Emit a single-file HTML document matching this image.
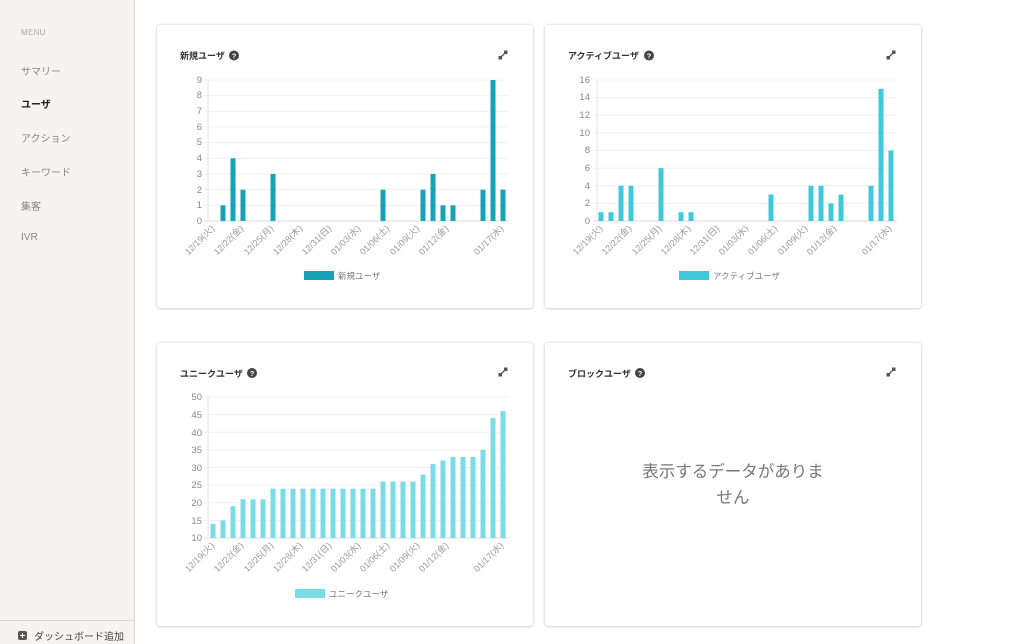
<!DOCTYPE html>
<html><head><meta charset="utf-8">
<style>
*{margin:0;padding:0;box-sizing:border-box}
body{width:1024px;height:644px;overflow:hidden;background:#fff;font-family:"Liberation Sans","Noto Sans CJK JP",sans-serif;position:relative}
#side{position:absolute;left:0;top:0;width:135px;height:644px;background:#f5f4f2;border-right:1px solid #dcd9d5}
#side .m{position:absolute;left:21px;top:28px;font-size:8px;color:#b0aaa5;letter-spacing:.3px}
#side .it{position:absolute;left:21px;font-size:10px;color:#8a8580}
#side .act{color:#222;font-weight:bold}
#side .bot{position:absolute;left:0;right:0;top:620px;border-top:1px solid #dcd9d5}
#side .add{position:absolute;left:34px;top:628px;font-size:10px;color:#444}
#side .plus{position:absolute;left:18px;top:631px;width:9px;height:9px;background:#555;border-radius:2px}
#side .plus:before{content:"";position:absolute;left:2px;top:4px;width:5px;height:1px;background:#fff}
#side .plus:after{content:"";position:absolute;left:4px;top:2px;width:1px;height:5px;background:#fff}
.card{position:absolute;width:376px;height:283px;background:#fff;border-radius:3px;box-shadow:0 0 3px rgba(0,0,0,.18),0 1px 2px rgba(0,0,0,.1)}
svg{position:absolute;left:0;top:0}
.ttl{font-size:9px;font-weight:bold;fill:#333}
.yl{font-size:9.5px;fill:#888;text-anchor:end}
.xl{font-size:9px;fill:#999;text-anchor:end}
.lg{font-size:8.5px;fill:#777}
</style></head><body>
<div id="side">
<div class="m">MENU</div>
<div class="it" style="top:63px">サマリー</div>
<div class="it act" style="top:96px">ユーザ</div>
<div class="it" style="top:130px">アクション</div>
<div class="it" style="top:164px">キーワード</div>
<div class="it" style="top:198px">集客</div>
<div class="it" style="top:232px">IVR</div>
<div class="bot"></div>
<div class="plus"></div>
<div class="add">ダッシュボード追加</div>
</div>
<div class="card" style="left:157px;top:25px"></div>
<div class="card" style="left:545px;top:25px"></div>
<div class="card" style="left:157px;top:343px"></div>
<div class="card" style="left:545px;top:343px"></div>
<svg id="s" width="1024" height="644" xmlns="http://www.w3.org/2000/svg">
<g id="grid"></g>
<g id="bars"></g>
<text class="ttl" x="180" y="59">新規ユーザ</text>
<text class="ttl" x="568" y="59">アクティブユーザ</text>
<text class="ttl" x="180" y="377">ユニークユーザ</text>
<text class="ttl" x="568" y="377">ブロックユーザ</text>
<g fill="#444">
<circle cx="234" cy="55.5" r="5"/><circle cx="649" cy="55.5" r="5"/><circle cx="252" cy="373" r="5"/><circle cx="640" cy="373" r="5"/>
</g>
<g font-size="7.5" font-weight="bold" fill="#fff" text-anchor="middle">
<text x="234" y="58.5">?</text><text x="649" y="58.5">?</text><text x="252" y="376">?</text><text x="640" y="376">?</text>
</g>
<g stroke="#555" stroke-width="1.3" fill="#555">
<g transform="translate(503,55)"><line x1="-3" y1="3" x2="3" y2="-3"/><rect x="-4.5" y="1" width="3.5" height="3.5" stroke="none"/><rect x="1" y="-4.5" width="3.5" height="3.5" stroke="none"/></g>
<g transform="translate(891,55)"><line x1="-3" y1="3" x2="3" y2="-3"/><rect x="-4.5" y="1" width="3.5" height="3.5" stroke="none"/><rect x="1" y="-4.5" width="3.5" height="3.5" stroke="none"/></g>
<g transform="translate(503,372)"><line x1="-3" y1="3" x2="3" y2="-3"/><rect x="-4.5" y="1" width="3.5" height="3.5" stroke="none"/><rect x="1" y="-4.5" width="3.5" height="3.5" stroke="none"/></g>
<g transform="translate(891,372)"><line x1="-3" y1="3" x2="3" y2="-3"/><rect x="-4.5" y="1" width="3.5" height="3.5" stroke="none"/><rect x="1" y="-4.5" width="3.5" height="3.5" stroke="none"/></g>
</g>
<g class="yl">
<text x="202" y="224">0</text><text x="202" y="208">1</text><text x="202" y="193">2</text><text x="202" y="177">3</text><text x="202" y="161">4</text><text x="202" y="145">5</text><text x="202" y="130">6</text><text x="202" y="114">7</text><text x="202" y="98">8</text><text x="202" y="83">9</text>
<text x="590" y="224">0</text><text x="590" y="206">2</text><text x="590" y="189">4</text><text x="590" y="171">6</text><text x="590" y="153">8</text><text x="590" y="136">10</text><text x="590" y="118">12</text><text x="590" y="100">14</text><text x="590" y="83">16</text>
<text x="202" y="541">10</text><text x="202" y="524">15</text><text x="202" y="506">20</text><text x="202" y="488">25</text><text x="202" y="471">30</text><text x="202" y="453">35</text><text x="202" y="436">40</text><text x="202" y="418">45</text><text x="202" y="400">50</text>
</g>
<g class="xl">
<text transform="translate(215,229) rotate(-45)">12/19(火)</text>
<text transform="translate(244,229) rotate(-45)">12/22(金)</text>
<text transform="translate(274,229) rotate(-45)">12/25(月)</text>
<text transform="translate(303,229) rotate(-45)">12/28(木)</text>
<text transform="translate(332,229) rotate(-45)">12/31(日)</text>
<text transform="translate(361,229) rotate(-45)">01/03(水)</text>
<text transform="translate(390,229) rotate(-45)">01/06(土)</text>
<text transform="translate(420,229) rotate(-45)">01/09(火)</text>
<text transform="translate(449,229) rotate(-45)">01/12(金)</text>
<text transform="translate(504,229) rotate(-45)">01/17(水)</text>
</g>
<g class="xl">
<text transform="translate(603,229) rotate(-45)">12/19(火)</text>
<text transform="translate(632,229) rotate(-45)">12/22(金)</text>
<text transform="translate(662,229) rotate(-45)">12/25(月)</text>
<text transform="translate(691,229) rotate(-45)">12/28(木)</text>
<text transform="translate(720,229) rotate(-45)">12/31(日)</text>
<text transform="translate(749,229) rotate(-45)">01/03(水)</text>
<text transform="translate(778,229) rotate(-45)">01/06(土)</text>
<text transform="translate(808,229) rotate(-45)">01/09(火)</text>
<text transform="translate(837,229) rotate(-45)">01/12(金)</text>
<text transform="translate(892,229) rotate(-45)">01/17(水)</text>
</g>
<g class="xl">
<text transform="translate(215,546) rotate(-45)">12/19(火)</text>
<text transform="translate(244,546) rotate(-45)">12/22(金)</text>
<text transform="translate(274,546) rotate(-45)">12/25(月)</text>
<text transform="translate(303,546) rotate(-45)">12/28(木)</text>
<text transform="translate(332,546) rotate(-45)">12/31(日)</text>
<text transform="translate(361,546) rotate(-45)">01/03(水)</text>
<text transform="translate(390,546) rotate(-45)">01/06(土)</text>
<text transform="translate(420,546) rotate(-45)">01/09(火)</text>
<text transform="translate(449,546) rotate(-45)">01/12(金)</text>
<text transform="translate(504,546) rotate(-45)">01/17(水)</text>
</g>
<rect x="304" y="271" width="30" height="9" fill="#17a2b8"/><text class="lg" x="338" y="279">新規ユーザ</text>
<rect x="679" y="271" width="30" height="9" fill="#41c8dc"/><text class="lg" x="713" y="279">アクティブユーザ</text>
<rect x="295" y="589" width="30" height="9" fill="#7bdbe6"/><text class="lg" x="329" y="597">ユニークユーザ</text>
<text x="733" y="477" font-size="16.5" fill="#777" text-anchor="middle">表示するデータがありま</text>
<text x="733" y="503" font-size="16.5" fill="#777" text-anchor="middle">せん</text>
</svg>
<script>
var NS="http://www.w3.org/2000/svg";
function el(p,t,a){var e=document.createElementNS(NS,t);for(var k in a)e.setAttribute(k,a[k]);p.appendChild(e);}
var G=document.getElementById('grid'),B=document.getElementById('bars');
function chart(ax,c0,yTop,yBot,vmin,vmax,nGrid,data,col){
  for(var i=0;i<=nGrid;i++){var y=yBot-(yBot-yTop)*i/nGrid;el(G,'line',{x1:ax-4,x2:ax+300,y1:y,y2:y,stroke:i==0?'#ddd':'#f0f0f0','stroke-width':1});}
  el(G,'line',{x1:ax,x2:ax,y1:yTop,y2:yBot,stroke:'#e4e4e4','stroke-width':1});
  for(var j=0;j<data.length;j++){var v=data[j];if(v<=vmin)continue;var h=(yBot-yTop)*(v-vmin)/(vmax-vmin);el(B,'rect',{x:c0+10*j-2.5,y:yBot-h,width:5,height:h,fill:col});}
}
var d1=new Array(30).fill(0);[[1,1],[2,4],[3,2],[6,3],[17,2],[21,2],[22,3],[23,1],[24,1],[27,2],[28,9],[29,2]].forEach(function(p){d1[p[0]]=p[1];});
var d2=new Array(30).fill(0);[[0,1],[1,1],[2,4],[3,4],[6,6],[8,1],[9,1],[17,3],[21,4],[22,4],[23,2],[24,3],[27,4],[28,15],[29,8]].forEach(function(p){d2[p[0]]=p[1];});
var d3=[14,15,19,21,21,21,24,24,24,24,24,24,24,24,24,24,24,26,26,26,26,28,31,32,33,33,33,35,44,46];
chart(208,213,80,221,0,9,9,d1,'#17a2b8');
chart(597,601,80,221,0,16,8,d2,'#41c8dc');
chart(208,213,397,538,10,50,8,d3,'#7bdbe6');
</script>
</body></html>
